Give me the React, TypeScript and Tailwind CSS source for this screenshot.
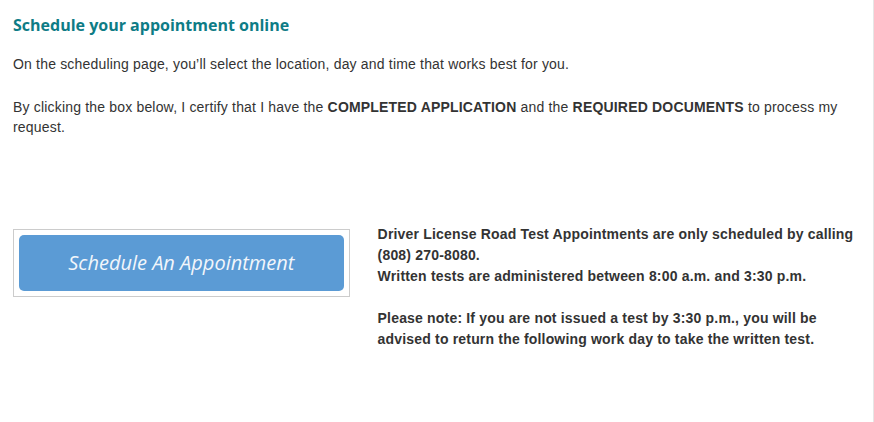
import React from 'react'

export default function App() {
  return (
    <div className="min-h-screen w-[874px] bg-white border-r border-[#e6e6e6] font-['Liberation_Sans',Arial,sans-serif] text-[14px] tracking-[0.18px] text-[#333]">
      <div className="pl-[13px] pr-[14px] pt-[13px]">
        <h2 className="font-['Open_Sans',sans-serif] font-bold text-[16px] leading-[24px] tracking-normal text-[#0e7c86]">
          Schedule your appointment online
        </h2>
        <p className="mt-[17px] leading-[20px]">
          On the scheduling page, you’ll select the location, day and time that works best for you.
        </p>
        <p className="mt-[23px] leading-[20px] pr-[20px]">
          By clicking the box below, I certify that I have the <strong>COMPLETED APPLICATION</strong> and the{' '}
          <strong>REQUIRED DOCUMENTS</strong> to process my request.
        </p>

        <div className="mt-[87px] flex items-start">
          <a
            href="#"
            className="mt-[5px] block w-[337px] h-[68px] border border-[#cccccc] p-[5px]"
          >
            <div className="h-full rounded-[5px] bg-[#5b9bd5] flex items-center justify-center">
              <span className="font-['Open_Sans',sans-serif] italic text-[20px] tracking-normal text-[#f2f6fb]">
                Schedule An Appointment
              </span>
            </div>
          </a>
          <div className="ml-[28px] w-[482px] font-bold leading-[21px]">
            <p>
              Driver License Road Test Appointments are only scheduled by calling (808) 270-8080.
              <br />
              Written tests are administered between 8:00 a.m. and 3:30 p.m.
            </p>
            <p className="mt-[21px]">
              Please note: If you are not issued a test by 3:30 p.m., you will be advised to return the following work day to take the written test.
            </p>
          </div>
        </div>
      </div>
    </div>
  )
}
